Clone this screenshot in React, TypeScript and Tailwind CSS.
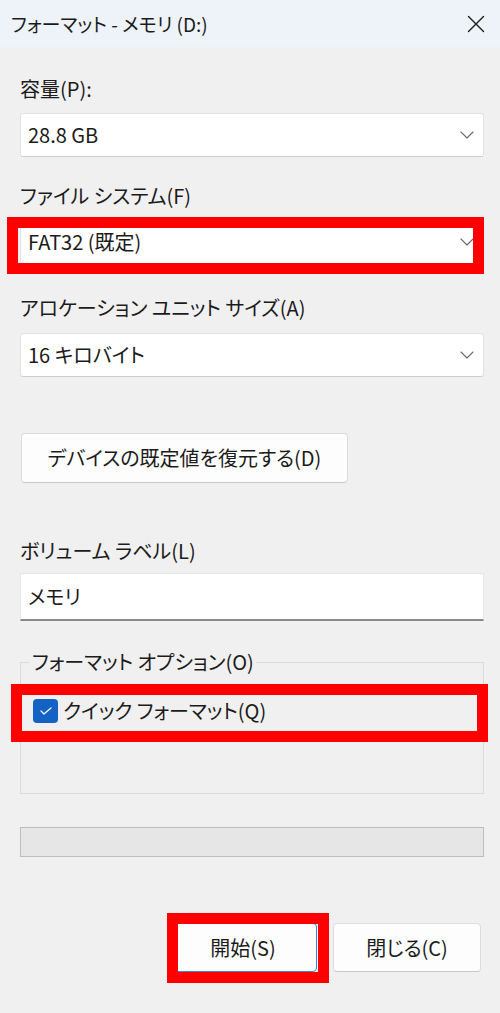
import React from 'react';

function Chevron() {
  return (
    <svg width="14" height="8" viewBox="0 0 14 8" fill="none">
      <path d="M1 1l6 6 6-6" stroke="#6a6a6a" strokeWidth="1.1" strokeLinecap="round" strokeLinejoin="round" />
    </svg>
  );
}

function Select({ value }: { value: string }) {
  return (
    <div className="h-[44px] bg-white border border-[#e2e2e2] border-b-[#cdcdcd] rounded-[3px] flex items-center justify-between pl-[7px] pr-[9px]">
      <span>{value}</span>
      <Chevron />
    </div>
  );
}

// red annotation frame laid over a control
function Mark({ className }: { className: string }) {
  return <div className={`absolute border-[11px] border-[#ff0000] pointer-events-none ${className}`} />;
}

function App() {
  return (
    <div className="w-[500px] h-[1013px] bg-[#f0f0f0] text-[#1b1b1b] font-['Noto_Sans_CJK_JP',sans-serif] text-[20px] leading-[24px] [font-feature-settings:'palt'] overflow-hidden">
      {/* Title bar */}
      <div className="h-[47px] bg-[#eef2f9] flex items-center justify-between pl-[11px] pr-[15px]">
        <span className="text-[19px]">フォーマット - メモリ (D:)</span>
        <svg width="18" height="18" viewBox="0 0 18 18" fill="none">
          <path d="M1.5 1.5l15 15M16.5 1.5l-15 15" stroke="#1b1b1b" strokeWidth="1.4" strokeLinecap="round" />
        </svg>
      </div>

      <div className="pl-[20px] pr-[16px]">
        <div className="mt-[30px]">容量(P):</div>
        <div className="mt-[12px]">
          <Select value="28.8 GB" />
        </div>

        <div className="mt-[27px]">ファイル システム(F)</div>
        <div className="mt-[12px] relative">
          <Select value="FAT32 (既定)" />
          <Mark className="left-[-13px] right-0 top-[-3px] bottom-[-10px]" />
        </div>

        <div className="mt-[32px]">アロケーション ユニット サイズ(A)</div>
        <div className="mt-[13px]">
          <Select value="16 キロバイト" />
        </div>

        <button className="mt-[56px] ml-[1px] w-[327px] h-[50px] bg-[#fdfdfd] border border-[#dcdcdc] border-b-[#c8c8c8] rounded-[4px] flex items-center justify-center">
          デバイスの既定値を復元する(D)
        </button>

        <div className="mt-[56px]">ボリューム ラベル(L)</div>
        <div className="mt-[10px] h-[48px] bg-white border border-[#e6e6e6] border-b-[2px] border-b-[#8a8a8a] flex items-center pl-[7px]">
          メモリ
        </div>

        <fieldset className="mt-[29px] h-[144px] border border-[#dadada] pl-[9px] pr-[9px]">
          <legend className="px-[2px]">フォーマット オプション(O)</legend>
          <div className="relative mt-[25px] ml-[3px] h-[24px] flex items-center gap-[5px]">
            <div className="w-[25px] h-[24px] rounded-[4px] bg-[#1462c3] flex items-center justify-center">
              <svg width="14" height="10" viewBox="0 0 14 10" fill="none">
                <path d="M2 5l3 3L12 2" stroke="#ffffff" strokeWidth="1.2" strokeLinecap="round" strokeLinejoin="round" />
              </svg>
            </div>
            <span>クイック フォーマット(Q)</span>
            <Mark className="left-[-22px] right-[-14px] top-[-15px] bottom-[-19px]" />
          </div>
        </fieldset>

        <div className="mt-[33px] h-[30px] bg-[#e6e6e6] border border-[#bdbdbd]" />

        <div className="mt-[66px] flex justify-end gap-[16px] pr-[3px]">
          <div className="relative">
            <button className="w-[148px] h-[49px] bg-[#fdfdfd] border border-[#3d86d4] rounded-[4px] flex items-center justify-center">
              開始(S)
            </button>
            <Mark className="left-[-2px] right-[-12px] top-[-10px] bottom-[-11px]" />
          </div>
          <button className="w-[148px] h-[49px] bg-[#fdfdfd] border border-[#dcdcdc] border-b-[#c8c8c8] rounded-[4px] flex items-center justify-center">
            閉じる(C)
          </button>
        </div>
      </div>
    </div>
  );
}

export default App;
